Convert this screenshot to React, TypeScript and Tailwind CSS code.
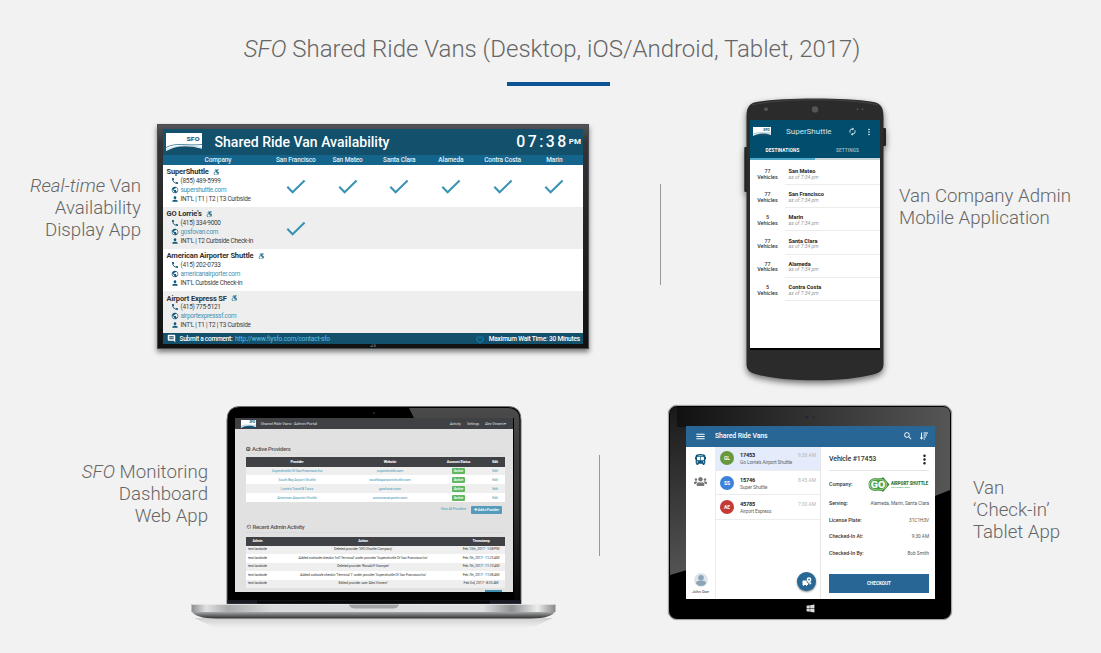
import React from "react";
import { MdPhone, MdPublic, MdPerson, MdComment, MdMoreVert, MdMenu, MdAutorenew, MdSearch, MdHistory } from "react-icons/md";
import { FaAccessibleIcon, FaBusAlt, FaUsers, FaWindows, FaSortAmountDown } from "react-icons/fa";

function SfoLogo({ className }: { className: string }) {
  return (
    <svg className={className} viewBox="0 0 36 18" preserveAspectRatio="none">
      <rect width="36" height="18" fill="#fff" />
      <text x="20.5" y="7.8" fontSize="6.2" fontWeight="700" fill="#12506c" fontFamily="Roboto, sans-serif" textLength="13" lengthAdjust="spacingAndGlyphs">SFO</text>
      <path d="M0 14.5C10 9 20 13 36 11.5" fill="none" stroke="#2b6f90" strokeWidth="0.8" />
      <path d="M0 18C8 13.5 20 11 36 15.8V18Z" fill="#12506c" />
      <path d="M0 16.6C10 13 22 11 36 14.8" fill="none" stroke="#7fb2c6" strokeWidth="0.5" />
    </svg>
  );
}

const vans = [
  { name: "SuperShuttle", phone: "(855) 489-5999", site: "supershuttle.com", where: "INT'L | T1 | T2 | T3 Curbside", checks: 6 },
  { name: "GO Lorrie's", phone: "(415) 334-9000", site: "gosfovan.com", where: "INT'L | T2 Curbside Check-in", checks: 1 },
  { name: "American Airporter Shuttle", phone: "(415) 202-0733", site: "americanairporter.com", where: "INT'L Curbside Check-in", checks: 0 },
  { name: "Airport Express SF", phone: "(415) 775-5121", site: "airportexpresssf.com", where: "INT'L | T1 | T2 | T3 Curbside", checks: 0 },
];
const counties = ["San Francisco", "San Mateo", "Santa Clara", "Alameda", "Contra Costa", "Marin"];

function Television() {
  return (
    <section className="relative h-[225px] w-[432px] shrink-0 bg-[linear-gradient(180deg,#55565a_0%,#34353a_8%,#222_50%,#111_100%)] px-[6px] pt-[5px] shadow-[0_3px_5px_rgba(0,0,0,0.5)] ring-1 ring-inset ring-[#4b4c50]">
      <div className="h-[215px] w-[420px] bg-white text-[#3c3f42]">
        <div className="flex h-[26px] items-center bg-[#12506c] pl-[3px] text-white">
          <SfoLogo className="h-[18px] w-[36px]" />
          <h2 className="ml-[12.5px] whitespace-nowrap text-[14.05px] font-medium leading-[18px]">Shared Ride Van Availability</h2>
          <div className="ml-auto flex items-center pr-[2px]">
            <span className="text-[15.8px] font-medium leading-[18px] tracking-[2.5px]">07:38</span>
            <span className="text-[8px] font-bold leading-[10px]">PM</span>
          </div>
        </div>
        <div className="grid h-[10px] grid-cols-[107px_repeat(6,51.7px)] items-center bg-[#14648c] text-center text-[6.5px] font-medium leading-[10px] tracking-[-0.1px] text-[#e4f0f5]">
          <span className="pl-[3px]">Company</span>
          {counties.map((c) => <span key={c} className="whitespace-nowrap">{c}</span>)}
        </div>
        {vans.map((v, i) => (
          <div key={v.name} className={`grid h-[42.1px] grid-cols-[107px_repeat(6,51.7px)] ${i % 2 ? "bg-[#eeeeee]" : "bg-white"}`}>
            <div className="whitespace-nowrap pl-[3.5px] pt-[2px] text-[6.45px] leading-[9px] tracking-[-0.27px]">
              <div className="flex h-[9.5px] items-center gap-[4px] text-[7.5px] font-bold tracking-[-0.14px] text-[#303234]">
                {v.name}<FaAccessibleIcon className="size-[6.5px] text-[#1b6c8e]" />
              </div>
              <div className="flex h-[9px] items-center gap-[2px] pl-[4px]"><MdPhone className="size-[8px] text-[#12587a]" />{v.phone}</div>
              <div className="flex h-[9px] items-center gap-[2px] pl-[4px] text-[#3b93b3]"><MdPublic className="size-[8px] text-[#12587a]" />{v.site}</div>
              <div className="flex h-[9px] items-center gap-[2px] pl-[4px]"><MdPerson className="size-[8px] text-[#12587a]" />{v.where}</div>
            </div>
            {counties.map((c, n) => (
              <div key={c} className="flex items-start justify-center pt-[13.5px]">
                {n < v.checks && (
                  <svg className="h-[16px] w-[20px]" viewBox="0 0 20 16"><path d="M1.3 7.8L6.6 13.2L18.6 1.6" fill="none" stroke="#3b93b3" strokeWidth="2.1" /></svg>
                )}
              </div>
            ))}
          </div>
        ))}
        <div className="flex h-[11px] items-center bg-[#12506c] pl-[3.5px] pr-[3px] text-[6.6px] font-medium leading-[10px] tracking-[-0.2px] text-white">
          <MdComment className="size-[9px]" />
          <span className="ml-[4px] tracking-[-0.28px]">Submit a comment:</span>
          <span className="ml-[2.5px] font-normal text-[#5cc0e4]">http://www.flysfo.com/contact-sfo</span>
          <svg className="ml-auto size-[8px]" viewBox="0 0 8 8"><path d="M2.2 1.4A3.2 3.2 0 1 0 5.8 1.4M4 0.5V4" fill="none" stroke="#168fce" strokeWidth="0.9" /></svg>
          <span className="ml-[5px]">Maximum Wait Time: 30 Minutes</span>
        </div>
      </div>
      <div className="mt-[1px] text-center text-[3px] leading-[3px] text-[#aaa]">●LG</div>
    </section>
  );
}

const stops = [["77", "San Mateo"], ["77", "San Francisco"], ["5", "Marin"], ["77", "Santa Clara"], ["77", "Alameda"], ["5", "Contra Costa"]];

function Phone() {
  return (
    <section className="relative h-[285px] w-[142px] shrink-0 pl-[6px] pt-[22px]">
      <svg className="absolute inset-0 h-[285px] w-[142px] overflow-visible drop-shadow-[0_3px_3px_rgba(0,0,0,0.55)]" viewBox="0 0 142 285">
        <rect x="0.3" y="49" width="4" height="45" rx="1" fill="#242424" />
        <rect x="137.5" y="30" width="4.5" height="18" rx="1" fill="#242424" />
        <path d="M2.5 19C2.5 8 6 5 14 3.8C40 -0.5 102 -0.5 128 3.8C136 5 139.5 8 139.5 19V266C139.5 272 136 275 129 276.5C100 284.3 42 284.3 13 276.5C6 275 2.5 272 2.5 266Z" fill="#2b2b2b" />
        <path d="M8 7C35 0 107 0 134 7" fill="none" stroke="#444" strokeWidth="1" />
        <circle cx="22" cy="11.2" r="1.9" fill="#555" /><circle cx="71" cy="11.4" r="3.2" fill="#555" />
        <circle cx="113.5" cy="11.2" r="1" fill="#505050" /><circle cx="118.5" cy="11.2" r="1" fill="#505050" />
      </svg>
      <div className="relative h-[230px] w-[130px] border-b-2 border-black bg-white">
        <div className="flex h-[23px] items-center bg-[#004d6d] pl-[3px] pr-[6px] text-white">
          <SfoLogo className="h-[9px] w-[18px]" />
          <span className="ml-[15px] text-[8px] leading-[10px] text-[#d9e6ec]">SuperShuttle</span>
          <MdAutorenew className="ml-auto size-[9px]" />
          <MdMoreVert className="ml-[7px] size-[10px]" />
        </div>
        <div className="grid h-[17px] grid-cols-2 bg-[#004d6d] text-center text-[4.7px] leading-[15px] tracking-[0.1px]">
          <span className="border-b-2 border-[#4fa9ca] font-bold text-white">DESTINATIONS</span>
          <span className="border-b-2 border-[#c9d5da] font-medium text-[#a8c3cf]">SETTINGS</span>
        </div>
        {stops.map(([n, s]) => (
          <div key={s} className="flex h-[23.2px]">
            <div className="w-[35px] pt-[9px] text-center text-[5.4px] font-medium leading-[5.6px] text-[#333]">{n}<br />Vehicles</div>
            <div className="h-[25px] grow border-b border-[#ececec] pl-[3.5px] pt-[9px] leading-[5.6px]">
              <div className="text-[5.6px] font-bold text-[#222]">{s}</div>
              <div className="text-[5.1px] italic text-[#999]">as of 7:34 pm</div>
            </div>
          </div>
        ))}
      </div>
    </section>
  );
}

const providers = [["Supershuttle Of San Francisco Inc", "supershuttle.com"], ["South Bay Airport Shuttle", "southbayairportshuttle.com"], ["Lorrie's Travel & Tours", "gosfovan.com"], ["American Airporter Shuttle", "americanairporter.com"]];
const activity = [
  ["Deleted provider 'SFO Shuttle Company'", "Feb 13th, 2017 - 1:08 PM"],
  ["Added curbside checkin 'Int'l Terminal' under provider 'Supershuttle Of San Francisco Inc'", "Feb 7th, 2017 - 11:25 AM"],
  ["Deleted provider 'Ronald F Stamper'", "Feb 7th, 2017 - 11:10 AM"],
  ["Added curbside checkin 'Terminal 1' under provider 'Supershuttle Of San Francisco Inc'", "Feb 7th, 2017 - 11:08 AM"],
  ["Edited provider user 'Alex Vincent'", "Feb 3rd, 2017 - 8:35 AM"],
];

function Laptop() {
  return (
    <section className="relative h-[214px] w-[365px] shrink-0 pl-[44px] pt-[12px]">
      <svg className="absolute inset-0 h-[232px] w-[365px] overflow-visible" viewBox="0 0 365 232">
        <defs>
          <linearGradient id="gloss" x1="0" y1="0" x2="0" y2="1"><stop offset="0" stopColor="#4a4a4a" /><stop offset="0.5" stopColor="#303030" /><stop offset="1" stopColor="#050505" /></linearGradient>
          <linearGradient id="silver" x1="0" y1="0" x2="1" y2="0"><stop offset="0" stopColor="#8b8d8f" /><stop offset="0.04" stopColor="#e0e1e2" /><stop offset="0.1" stopColor="#a9abad" /><stop offset="0.22" stopColor="#d9dadb" /><stop offset="0.8" stopColor="#dfe0e1" /><stop offset="0.88" stopColor="#8f9193" /><stop offset="0.95" stopColor="#ececec" /><stop offset="1" stopColor="#888" /></linearGradient>
          <linearGradient id="under" x1="0" y1="0" x2="0" y2="1"><stop offset="0" stopColor="#b8babc" /><stop offset="0.6" stopColor="#66686a" /><stop offset="1" stopColor="#333" /></linearGradient>
          <linearGradient id="mirror" x1="0" y1="0" x2="0" y2="1"><stop offset="0" stopColor="#cfcfcf" /><stop offset="1" stopColor="#f2f2f2" /></linearGradient>
        </defs>
        <path d="M3 212H362L340 222H25Z" fill="url(#mirror)" />
        <path d="M36 198V14Q36 0.5 49 0.5H317Q330 0.5 330 14V198Z" fill="#000" stroke="#6c6e70" strokeWidth="1" />
        <path d="M218 2H316Q328.5 2 328.5 14V197H323V12H223Z" fill="url(#gloss)" />
        <path d="M36.5 194H330V198H36.5Z" fill="#191c24" /><path d="M66 194.5H299V198H66Z" fill="#08090b" />
        <circle cx="183" cy="7" r="1.1" fill="#2b2e33" />
        <path d="M0.5 205H364.5C362 210 354 212.4 340 212.4H25C11 212.4 3 210 0.5 205Z" fill="url(#under)" />
        <path d="M0.5 198H364.5V206H0.5Z" fill="url(#silver)" /><path d="M0.5 198.4H364.5" stroke="#eee" strokeWidth="0.8" />
        <path d="M158 198.5H208Q207 202.5 202 202.5H164Q159 202.5 158 198.5Z" fill="#a1a3a5" />
      </svg>
      <div className="relative h-[174px] w-[278px] overflow-hidden bg-[#e1e1e1] text-[#444]">
        <div className="flex h-[11px] items-center bg-[#3f4145] pl-[6px] pr-[7px] text-[3.8px] leading-[5px] tracking-[-0.22px] text-[#ddd]">
          <SfoLogo className="h-[8px] w-[15px]" />
          <span className="ml-[4.5px] text-[4.3px] tracking-[-0.17px]">Shared Ride Vans - Admin Portal</span>
          <span className="ml-auto">Activity</span><span className="ml-[6.5px]">Settings</span><span className="ml-[6px]">Alex Vincent ▾</span>
        </div>
        <div className="px-[11px]">
          <h3 className="mt-[16px] flex h-[9px] items-center gap-[1.5px] border-b border-[#dadada] text-[5.9px] font-medium leading-[7px] tracking-[-0.28px] text-[#555]"><FaBusAlt className="size-[4.5px]" />Active Providers</h3>
          <div className="mt-[3px] w-[259px] bg-white text-center text-[3.8px] leading-[5px] tracking-[-0.2px]">
            <div className="grid h-[9.5px] grid-cols-[102px_84px_53px_20px] items-center bg-[#3f4145] font-bold text-white"><span>Provider</span><span>Website</span><span>Account Status</span><span>Edit</span></div>
            {providers.map(([a, b], i) => (
              <div key={a} className={`grid h-[8.9px] grid-cols-[102px_84px_53px_20px] items-center text-[#4c9dba] ${i % 2 ? "bg-white" : "bg-[#efefef]"}`}>
                <span>{a}</span><span>{b}</span><span className="mx-auto w-[13px] rounded-[1px] bg-[#62b862] text-[3.8px] font-medium leading-[6px] text-white">Active</span><span>Edit</span>
              </div>
            ))}
          </div>
          <div className="mt-[3.5px] flex h-[8px] items-center justify-end gap-[5px] text-[3.5px] leading-[5px] tracking-[-0.15px]">
            <span className="text-[#4c9dba]">View All Providers</span>
            <span className="w-[31px] rounded-[1px] bg-[#569cba] text-center font-medium leading-[8px] text-white">✚ Add a Provider</span>
          </div>
          <h3 className="mt-[9px] flex h-[10px] items-center gap-[1px] border-b border-[#dadada] text-[5.9px] font-medium leading-[7px] tracking-[-0.3px] text-[#555]"><MdHistory className="size-[5.5px]" />Recent Admin Activity</h3>
          <div className="mt-[4px] w-[259px] bg-white text-center text-[3.65px] leading-[5px] tracking-[-0.15px]">
            <div className="grid h-[9px] grid-cols-[23px_188px_48px] items-center bg-[#3f4145] font-bold text-white"><span>Admin</span><span>Action</span><span>Timestamp</span></div>
            {activity.map(([a, b], i) => (
              <div key={a} className={`grid h-[8.5px] grid-cols-[23px_188px_48px] items-center whitespace-nowrap ${i % 2 ? "bg-white" : "bg-[#efefef]"}`}><span>test landside</span><span>{a}</span><span>{b}</span></div>
            ))}
          </div>
          <div className="ml-auto mt-[2px] h-[4px] w-[17px] bg-[#3f8fae]" />
        </div>
      </div>
    </section>
  );
}

const checkins = [
  { id: "17453", co: "Go Lorrie's Airport Shuttle", t: "9:30 AM", ini: "GL", bg: "bg-[#68983c]", row: "bg-[#e4ebfa]" },
  { id: "15746", co: "Super Shuttle", t: "8:45 AM", ini: "SS", bg: "bg-[#3b82da]", row: "bg-white" },
  { id: "45785", co: "Airport Express", t: "7:30 AM", ini: "AE", bg: "bg-[#c43a36]", row: "bg-white" },
];

function Tablet() {
  return (
    <section className="relative h-[215px] w-[284px] shrink-0 overflow-hidden rounded-[9px] border border-[#a5a7a9] bg-black pl-[17px] pt-[20px] shadow-[0_0_1px_rgba(0,0,0,0.5)]">
      <svg className="absolute inset-0 h-[213px] w-[282px]" viewBox="0 0 282 213">
        <defs><linearGradient id="glare" x1="0" y1="0" x2="0.3" y2="1"><stop offset="0" stopColor="#191919" /><stop offset="1" stopColor="#585858" /></linearGradient><linearGradient id="glare2"><stop offset="0" stopColor="#111" /><stop offset="1" stopColor="#565656" /></linearGradient></defs>
        <path d="M1 8Q1 1 8 1H160V21H18V164L1 169Z" fill="url(#glare)" />
        <path d="M8 1H274Q281 1 281 8V84L266 90V21H8Z" fill="url(#glare2)" />
        <circle cx="138" cy="11" r="1.5" fill="#20253a" /><circle cx="145" cy="11" r="0.8" fill="#202020" />
      </svg>
      <div className="relative h-[173px] w-[249px] bg-white text-[#333]">
        <div className="flex h-[20.5px] items-center bg-[#286695] pl-[8.5px] pr-[7px] text-white">
          <MdMenu className="size-[11px]" /><h2 className="ml-[9.5px] text-[6.9px] font-medium leading-[9px] tracking-[-0.1px]">Shared Ride Vans</h2>
          <MdSearch className="ml-auto size-[10px]" /><FaSortAmountDown className="ml-[7px] size-[8px]" />
        </div>
        <div className="flex h-[152.5px]">
          <nav className="flex w-[30px] flex-col items-center border-r border-[#ececec] pt-[7px] text-[3.8px] leading-[5px]">
            <FaBusAlt className="size-[11px] text-[#12587a]" /><FaUsers className="mt-[10px] size-[13px] text-[#777]" />
            <svg className="mt-auto size-[14px]" viewBox="0 0 14 14"><circle cx="7" cy="7" r="7" fill="#dde5ea" /><circle cx="7" cy="4.8" r="2.8" fill="#8ba5b6" /><path d="M2 10.5Q2 7.7 5 7.7H9Q12 7.7 12 10.5Q10 13 7 13T2 10.5" fill="#8ba5b6" /></svg>
            <span className="mb-[5px] mt-[2.5px] text-[4px]">John Doe</span>
          </nav>
          <div className="flex w-[105px] flex-col border-r border-[#e6e6e6]">
            {checkins.map((c) => (
              <div key={c.id} className={`flex h-[24.4px] items-center border-b border-[#ececec] pl-[4px] pr-[4px] ${c.row}`}>
                <span className={`size-[14px] rounded-full text-center text-[5px] font-bold leading-[14px] text-white ${c.bg}`}>{c.ini}</span>
                <div className="ml-[6px] h-[14px] whitespace-nowrap text-[4.9px] leading-[7px] tracking-[-0.14px] text-[#666]"><div className="text-[5.5px] font-bold leading-[8px] text-[#222]">{c.id}</div>{c.co}</div>
                <span className="-ml-[10px] h-[14px] grow whitespace-nowrap text-right text-[4.9px] leading-[8px] text-[#b4b4b4]">{c.t}</span>
              </div>
            ))}
            <div className="mb-[8px] ml-auto mr-[4px] mt-auto flex size-[19px] items-center justify-center rounded-full bg-[#286695] text-white shadow-[0_1px_2px_rgba(0,0,0,0.5)]">
              <svg className="h-[9px] w-[10px]" viewBox="0 0 10 9"><path d="M0.5 4.2Q0.5 3.4 1.2 3.4H4.4Q4.8 5.2 6 6.6V8H5V8.8H4V8H2V8.8H1V8H0.5Z" fill="#fff" /><path d="M7 0.2A2.4 2.4 0 0 1 9.4 2.6C9.4 4.2 7.8 5 7 7C6.2 5 4.6 4.2 4.6 2.6A2.4 2.4 0 0 1 7 0.2Z" fill="#fff" /><circle cx="7" cy="2.6" r="0.9" fill="#286695" /><path d="M7 7.2H9.2V5.2H8.2" fill="#fff" /></svg>
            </div>
          </div>
          <div className="w-[114px] pl-[8px] pr-[6px] text-[5.2px] font-medium leading-[7px]">
            <div className="flex h-[24.5px] items-center justify-between border-b border-[#e4e4e4] pt-[2px] text-[7px] tracking-[-0.12px]"><span>Vehicle #17453</span><MdMoreVert className="-mr-[3px] size-[15px] text-[#222]" /></div>
            <div className="flex h-[26px] items-center justify-between"><span>Company:</span>
              <svg className="h-[15px] w-[61px] overflow-visible" viewBox="0 0 61 15"><path d="M7 1H14L15 0L21.5 7.5L15 15L14 14H7Q0.5 13 0.5 7.5T7 1Z" fill="#3c8b35" /><ellipse cx="10" cy="7.5" rx="8.8" ry="5.7" fill="#4da13f" stroke="#d5ead0" strokeWidth="0.7" /><text x="2.8" y="10.8" fontSize="9.2" fontWeight="900" fill="#fff" textLength="14.5" lengthAdjust="spacingAndGlyphs" fontFamily="Roboto, sans-serif">GO</text><text x="23" y="8.1" fontSize="5.1" fontWeight="900" fill="#27702e" textLength="37" lengthAdjust="spacingAndGlyphs" fontFamily="Roboto, sans-serif">AIRPORT SHUTTLE</text><text x="23" y="11.2" fontSize="2.4" fontWeight="700" fill="#4da13f" textLength="19" lengthAdjust="spacingAndGlyphs" fontFamily="Roboto, sans-serif">TO THE BAY AREA</text></svg>
            </div>
            {[["Serving:", "Alameda, Marin, Santa Clara", "h-[13px]"], ["License Plate:", "31C1H3V", "h-[20px]"], ["Checked-In At:", "9:30 AM", "h-[13px]"], ["Checked-In By:", "Bob Smith", "h-[21.5px]"]].map(([a, b, h]) => (
              <div key={a} className={`flex items-center justify-between whitespace-nowrap ${h}`}><span>{a}</span><span className="text-[4.7px] font-normal text-[#555]">{b}</span></div>
            ))}
            <div className="mt-[9.5px] h-[19px] bg-[#286695] text-center text-[4.7px] font-bold leading-[19px] tracking-[-0.05px] text-white">CHECKOUT</div>
          </div>
        </div>
      </div>
      <FaWindows className="absolute left-[137px] top-[198px] size-[9px] text-[#ddd]" />
    </section>
  );
}

export default function App() {
  return (
    <main className="h-[653px] w-[1101px] overflow-hidden bg-[#f2f2f2] font-['Roboto',sans-serif] text-[18.67px] font-light leading-[22px] text-[#666]">
      <header className="flex h-[98px] flex-col items-center pt-[34px]">
        <h1 className="mr-[-3px] whitespace-nowrap text-[24px] leading-[30px]"><em>SFO</em> Shared Ride Vans (Desktop, iOS/Android, Tablet, 2017)</h1>
        <div className="mr-[-15px] mt-[17.5px] h-[4px] w-[103px] bg-[#0b5394]" />
      </header>
      <div className="flex h-[307px] items-start">
        <p className="mt-[77px] w-[141px] text-right"><em>Real-time</em> Van<br />Availability<br />Display App</p>
        <div className="ml-[16px] mt-[26px] font-normal"><Television /></div>
        <div className="ml-[71px] mt-[86px] h-[101px] w-px bg-[#999]" />
        <div className="ml-[83px] font-normal"><Phone /></div>
        <p className="ml-[13px] mt-[87px] whitespace-nowrap">Van Company Admin<br />Mobile Application</p>
      </div>
      <div className="flex h-[248px] items-start">
        <p className="mt-[56px] w-[208px] text-right"><em>SFO</em> Monitoring<br />Dashboard<br />Web App</p>
        <div className="-ml-[17px] mt-[1px] font-normal"><Laptop /></div>
        <div className="ml-[43px] mt-[50px] h-[101px] w-px bg-[#999]" />
        <div className="ml-[68px] font-normal"><Tablet /></div>
        <p className="ml-[21px] mt-[72px] whitespace-nowrap">Van<br />‘Check-in’<br />Tablet App</p>
      </div>
    </main>
  );
}
